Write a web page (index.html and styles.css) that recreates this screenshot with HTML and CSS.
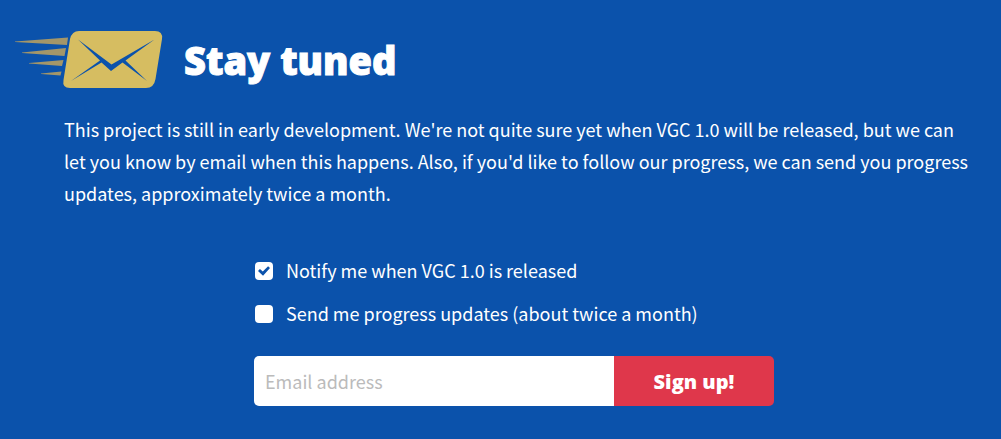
FILE: index.html
```html
<!DOCTYPE html>
<html lang="en">

<head>
    <meta charset="UTF-8">
    <meta name="viewport" content="width=device-width, initial-scale=1.0">
    <title>Stay tuned</title>
    <link rel="stylesheet" href="styles.css">
</head>

<body>

    <section class="signup">
        <header class="signup-header">
            <svg class="envelope" viewBox="0 0 148 60" aria-hidden="true">
                <g class="speed-lines">
                    <path d="M-1 11.500L52 7.500L51 15L-1 12Z" />
                    <path d="M6 22.500L50 18L48.500 26L6 23Z" />
                    <path d="M13 33L47.500 30L46 36L13 33.500Z" />
                    <path d="M25 43.500L45.500 41.500L44.500 45.500L25 44Z" />
                </g>
                <path class="envelope-body" d="M63 1H139Q147 1 146 9L139.500 49Q138 58 130 58H54Q46 58 47.500 50L54 9Q56 1 63 1Z" />
                <path class="envelope-fold" d="M62 9.500L95.500 34.500L138.500 9.500L109.500 30.500L131 51L106.500 32.500L95 41L85.500 32.500L55 51L84 30.500Z" />
            </svg>
            <h2>Stay tuned</h2>
        </header>

        <p>This project is still in early development. We're not quite sure yet when VGC 1.0 will be released, but we can let you know by email when this happens. Also, if you'd like to follow our progress, we can send you progress updates, approximately twice a month.</p>

        <form class="signup-form">
            <label class="option">
                <input type="checkbox" name="release" checked>
                Notify me when VGC 1.0 is released
            </label>
            <label class="option">
                <input type="checkbox" name="progress">
                Send me progress updates (about twice a month)
            </label>
            <div class="email-row">
                <input type="email" name="email" placeholder="Email address" aria-label="Email address" required>
                <button type="submit">Sign up!</button>
            </div>
        </form>
    </section>

</body>

</html>
```

FILE: styles.css
```css
* {
    box-sizing: border-box;
}

body {
    margin: 0;
    background-color: #0b52ab;
    color: #fff;
    font-family: "Source Sans Pro", "Noto Sans CJK SC", sans-serif;
    font-size: 18px;
    line-height: 32px;
}

.signup {
    max-width: 964px;
    padding: 30px 0 32px 64px;
}

.signup-header {
    display: flex;
    align-items: center;
    gap: 20px;
    margin-left: -48px;
}

.envelope {
    width: 148px;
    height: 60px;
    overflow: visible;
}

.speed-lines {
    fill: #a39669;
}

.envelope-body {
    fill: #d6bd61;
}

.envelope-fold {
    fill: #0b52ab;
}

h2 {
    margin: 0;
    font-family: "Open Sans", sans-serif;
    font-size: 38px;
    font-weight: 800;
    line-height: 60px;
    -webkit-text-stroke: 1px #fff;
}

p {
    margin: 23px -8px 45px 0;
}

.signup-form {
    display: flex;
    flex-direction: column;
    max-width: 520px;
    margin: 0 auto;
}

.option {
    display: flex;
    align-items: center;
    gap: 13px;
    margin-bottom: 11px;
    padding-left: 1px;
}

.option input {
    appearance: none;
    display: grid;
    place-items: center;
    width: 18px;
    height: 18px;
    margin: 2px 0 0;
    border-radius: 4px;
    background-color: #fff;
}

.option input:checked::before {
    content: "";
    width: 12px;
    height: 10px;
    background-color: #0b52ab;
    clip-path: polygon(0 50%, 16% 30%, 40% 55%, 84% 2%, 100% 20%, 42% 98%);
}

.email-row {
    display: flex;
    height: 50px;
    margin-top: 16px;
    border-radius: 5px;
    overflow: hidden;
}

.email-row input {
    flex: 1;
    min-width: 0;
    padding: 0 11px;
    border: none;
    background-color: #fff;
    color: #333;
    font: inherit;
}

.email-row input::placeholder {
    color: #bbb;
}

.email-row button {
    width: 160px;
    border: none;
    background-color: #df374b;
    color: #fff;
    font-family: "Open Sans", sans-serif;
    font-size: 20px;
    font-weight: 800;
    cursor: pointer;
}
```
